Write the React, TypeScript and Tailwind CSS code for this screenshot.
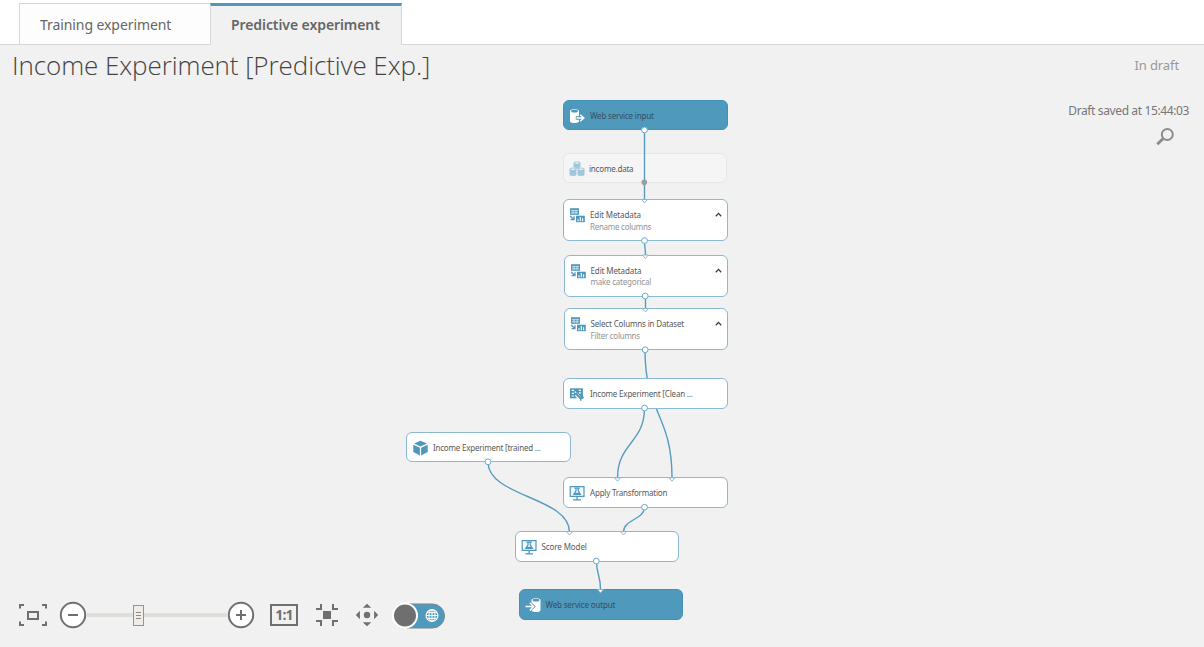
import React from 'react';

type IconName = 'input' | 'output' | 'dataset' | 'metadata' | 'clean' | 'cube' | 'score';

interface NodeSpec {
  x: number;
  y: number;
  h: number;
  icon: IconName;
  title: string;
  sub?: string;
  kind?: 'service' | 'ghost';
  textClass: string;
  subClass?: string;
}

const CANVAS_TOP = 90;

const nodes: NodeSpec[] = [
  { x: 563, y: 100, h: 30, icon: 'input', title: 'Web service input', kind: 'service', textClass: 'left-[26px] tracking-[-0.18px]' },
  { x: 562.5, y: 153, h: 30, icon: 'dataset', title: 'income.data', kind: 'ghost', textClass: 'left-[25.5px] tracking-[-0.2px]' },
  { x: 563, y: 199, h: 42, icon: 'metadata', title: 'Edit Metadata', sub: 'Rename columns', textClass: 'left-[26px] tracking-[-0.12px]', subClass: 'left-[26px] top-[21px] tracking-[-0.27px]' },
  { x: 563.5, y: 255, h: 42, icon: 'metadata', title: 'Edit Metadata', sub: 'make categorical', textClass: 'left-[26px] tracking-[-0.12px]', subClass: 'left-[26px] top-[20px] tracking-[-0.22px]' },
  { x: 563.5, y: 308, h: 42, icon: 'metadata', title: 'Select Columns in Dataset', sub: 'Filter columns', textClass: 'left-[26px] tracking-[-0.16px]', subClass: 'left-[26px] top-[21px] tracking-[-0.26px]' },
  { x: 563, y: 378, h: 31, icon: 'clean', title: 'Income Experiment [Clean ...', textClass: 'left-[26px] tracking-[-0.19px]' },
  { x: 406, y: 432, h: 30, icon: 'cube', title: 'Income Experiment [trained ...', textClass: 'left-[26px] tracking-[-0.21px]' },
  { x: 563, y: 477, h: 31, icon: 'score', title: 'Apply Transformation', textClass: 'left-[26px] tracking-[-0.2px]' },
  { x: 514.5, y: 531, h: 31, icon: 'score', title: 'Score Model', textClass: 'left-[26px] tracking-[-0.1px]' },
  { x: 518.5, y: 589, h: 31, icon: 'output', title: 'Web service output', kind: 'service', textClass: 'left-[26px] tracking-[-0.15px]' },
];

const backEdges = ['M645 350C645 414 672 414 672 478'];
const frontEdges = [
  'M644.5 130V199',
  'M644.5 241C644.5 248 645.5 248 645.5 255',
  'M645.5 296V309',
  'M644.5 408C644.5 443 617.5 443 617.5 478',
  'M488 462C488 497 569.5 497 569.5 532',
  'M644.5 507C644.5 520 623.5 519 623.5 532',
  'M596.5 561C596.5 575 600.5 575 600.5 589',
];
const outPorts = [
  [644.5, 130], [644.5, 240.5], [645.2, 296], [645.2, 349.8], [644.5, 408],
  [488, 461.8], [644.5, 507.2], [596.3, 561],
];
const inPorts = [
  [644.5, 200.5], [645.3, 256], [645.3, 309.5], [617.5, 478.8], [672, 478.8], [569.5, 532.6], [623.5, 532.6], [600.5, 590.5],
];

function NodeIcon({ name }: { name: IconName }) {
  const blue = '#4f98bb';
  switch (name) {
    case 'input':
      return (
        <svg width="16" height="16" viewBox="0 0 16 16" className="block">
          <path d="M1 3v10.200c0 2.400 9 2.400 9 0V3C10 .6 1 .6 1 3z" fill="#fff" />
          <ellipse cx="5.500" cy="3.200" rx="3.400" ry="1.400" fill={blue} />
          <path d="M6.800 10h7M10.800 6.500L14.700 10l-3.900 3.500" fill="none" stroke={blue} strokeWidth="3.400" />
          <path d="M7.500 10h7M11.200 6.800L14.800 10l-3.600 3.200" fill="none" stroke="#fff" strokeWidth="1.500" />
        </svg>
      );
    case 'output':
      return (
        <svg width="16" height="16" viewBox="0 0 16 16" className="block">
          <path d="M6.500 3v10.200c0 2.400 9 2.400 9 0V3c0-2.400-9-2.400-9 0z" fill="#fff" />
          <ellipse cx="11" cy="3.200" rx="3.400" ry="1.400" fill={blue} />
          <path d="M0 9.500h8M4.500 5.800L8.500 9.500l-4 3.900" fill="none" stroke={blue} strokeWidth="3.200" />
          <path d="M.5 9.500h8M4.800 5.800L8.600 9.500l-3.800 3.900" fill="none" stroke="#fff" strokeWidth="1.500" />
        </svg>
      );
    case 'dataset':
      return (
        <svg width="16" height="16" viewBox="0 0 16 16" className="block">
          {[[4.500, 0], [0.500, 6.300], [8.500, 6.300]].map(([x, y]) => (
            <g key={`${x}-${y}`} transform={`translate(${x} ${y})`}>
              <path d="M-.2 2v5.200c0 2.300 7.400 2.300 7.400 0V2C7.200-.3-.2-.3-.2 2z" fill="#9fc6d9" stroke="#f5f5f5" strokeWidth=".4" />
              <ellipse cx="3.500" cy="2" rx="2.500" ry=".8" fill="#e9f2f6" />
            </g>
          ))}
        </svg>
      );
    case 'metadata':
      return (
        <svg width="16" height="16" viewBox="0 0 16 16" className="block">
          <path d="M1 1.200h9v6.600H1z" fill={blue} />
          <path d="M1.800 3.700h7.400M1.800 5.800h7.400M4 2.800v4.300M7 2.800v4.300" stroke="#d9eaf2" strokeWidth=".8" />
          <path d="M1.200 9l3.300 3.200M5 9.300v3.400H1.600" fill="none" stroke={blue} strokeWidth="1.300" />
          <path d="M7 8.700h8.800v6.500H7z" fill={blue} />
          <path d="M9 14.200v-2M11.300 14.200V10M13.600 14.200v-3" stroke="#fff" strokeWidth="1.100" />
        </svg>
      );
    case 'clean':
      return (
        <svg width="16" height="16" viewBox="0 0 16 16" className="block">
          <path d="M1 2.300h12.900v10H1z" fill={blue} />
          <path d="M2.800 4.400h2.200M9.800 4.400h2M5.700 5.600l1.500 1.200M9.900 6.900h2M2.800 7.400h2.200M2.800 10h2.200" stroke="#fff" strokeWidth="1.200" />
          <path d="M7.200 8.500l5.500 6" stroke="#fff" strokeWidth="3.600" />
          <path d="M7.200 8l4.700 4.500" stroke={blue} strokeWidth="2" />
          <path d="M14 9.800l-2.400 2 .2 3M14.800 11.400l-2.800 1.200" stroke={blue} strokeWidth="1.400" fill="none" />
        </svg>
      );
    case 'cube':
      return (
        <svg width="16" height="16" viewBox="0 0 16 16" className="block">
          <path d="M8.500 .800L15 3.600 8.500 6.600 2 3.600z" fill={blue} />
          <path d="M1.300 4.700L7.900 7.700V15.500L1.300 12zM15.700 4.700L9.100 7.700V15.500l6.600-3.500z" fill={blue} />
        </svg>
      );
    case 'score':
      return (
        <svg width="16" height="16" viewBox="0 0 16 16" className="block">
          <path d="M1.200 1.600h13.800v9.700H1.200z" fill="#f4fafc" stroke={blue} strokeWidth="1.200" />
          <path d="M5.500 3.200h5.200M7 3.400v2.400L4.800 9.400h6.600L9.200 5.800V3.400" fill="none" stroke={blue} strokeWidth="1.200" />
          <path d="M5.800 7.700h4.600l.8 1.600H5z" fill={blue} />
          <path d="M8.100 11.300v3.300M4.200 14.900H12" stroke={blue} strokeWidth="1.300" />
        </svg>
      );
  }
}

function ExperimentNode({ node }: { node: NodeSpec }) {
  const { kind, sub } = node;
  const look =
    kind === 'service'
      ? 'bg-[#4f99bd] border-[#4290ba]'
      : kind === 'ghost'
        ? 'bg-[#f5f5f5] border-[#e5e7e8]'
        : 'bg-white border-[#8ab9d0]';
  const color = kind === 'service' ? 'text-[#36505d]' : 'text-[#595959]';
  return (
    <div
      className={`absolute w-[164.5px] rounded-[6px] border ${look}`}
      style={{ left: node.x, top: node.y - CANVAS_TOP, height: node.h }}
    >
      <div className="absolute left-[5px] top-[7px]">
        <NodeIcon name={node.icon} />
      </div>
      <div className={`absolute top-[8.5px] whitespace-nowrap text-[8px] leading-[12px] ${color} ${node.textClass}`}>
        {node.title}
      </div>
      {sub && (
        <>
          <div className={`absolute whitespace-nowrap text-[8px] leading-[11px] text-[#949494] ${node.subClass}`}>
            {sub}
          </div>
          <svg width="7" height="5" viewBox="0 0 7 5" className="absolute right-[5px] top-[12px]">
            <path d="M.8 4.300L3.500 1.400l2.700 2.900" fill="none" stroke="#3c3c3c" strokeWidth="1.300" />
          </svg>
        </>
      )}
    </div>
  );
}

function Edges({ paths, ports }: { paths: string[]; ports?: boolean }) {
  return (
    <svg width="1204" height="557" viewBox="0 90 1204 557" className="pointer-events-none absolute left-0 top-0">
      {paths.map((d) => (
        <path key={d} d={d} fill="none" stroke="#579dbf" strokeWidth="1.400" />
      ))}
      {ports && (
        <>
          <circle cx="644.300" cy="182.300" r="2.800" fill="#9a9fa2" />
          {inPorts.map(([x, y]) => (
            <path key={`${x},${y}`} d={`M${x - 3} ${y - 1}h6l-3 3.400z`} fill="#fff" stroke="#7fb4cd" strokeWidth=".9" />
          ))}
          {outPorts.map(([x, y]) => (
            <circle key={`${x},${y}`} cx={x} cy={y} r="2.900" fill="#fff" stroke="#6dabc9" strokeWidth="1" />
          ))}
        </>
      )}
    </svg>
  );
}

function Toolbar() {
  const g = '#6f6f6f';
  return (
    <div className="absolute bottom-[16px] left-[18px] flex h-[32px] items-center">
      <svg width="30" height="24" viewBox="0 0 30 24">
        <path d="M2 5.500V2h4M24 2h4v3.500M28 18.500V22h-4M6 22H2v-3.500" fill="none" stroke={g} strokeWidth="2" />
        <path d="M10 9h10v7H10z" fill="none" stroke={g} strokeWidth="2" />
      </svg>
      <svg width="28" height="28" viewBox="0 0 28 28" className="ml-[11px]">
        <circle cx="14" cy="14" r="12.200" fill="#fff" stroke={g} strokeWidth="2" />
        <path d="M9 14h10" stroke={g} strokeWidth="2" />
      </svg>
      <div className="relative h-[4px] w-[140px] bg-[#e0deda]">
        <div className="absolute left-[46px] top-[-8px] flex h-[21px] w-[11px] flex-col items-center justify-center gap-[2px] border border-[#979390] bg-[#f0ece8]">
          <span className="h-px w-[5px] bg-[#8d8985]" />
          <span className="h-px w-[5px] bg-[#8d8985]" />
          <span className="h-px w-[5px] bg-[#8d8985]" />
        </div>
      </div>
      <svg width="28" height="28" viewBox="0 0 28 28">
        <circle cx="14" cy="14" r="12.200" fill="#fff" stroke={g} strokeWidth="2" />
        <path d="M9 14h10M14 9v10" stroke={g} strokeWidth="2" />
      </svg>
      <div className="ml-[15px] flex h-[22px] w-[28px] items-center justify-center border-2 border-[#6f6f6f] font-['Open_Sans'] text-[14px] font-bold leading-none tracking-[-0.9px] text-[#6f6f6f]">
        <span className="-mt-px">1:1</span>
      </div>
      <svg width="24" height="24" viewBox="0 0 24 24" className="ml-[17px]">
        <path d="M8 8h8v8H8z" fill={g} />
        <path d="M1 6h5V1M23 6h-5V1M1 18h5v5M23 18h-5v5" fill="none" stroke={g} strokeWidth="2" />
      </svg>
      <svg width="24" height="24" viewBox="0 0 24 24" className="ml-[16px]">
        <circle cx="12" cy="12" r="3.200" fill={g} />
        <path d="M7.800 4.700h8.400L12 .700zM7.800 19.300h8.400l-4.200 4zM4.900 7.800v8.400L.8 12zM19.100 7.800v8.400l4.100-4.200z" fill={g} />
      </svg>
      <div className="relative ml-[17px] h-[25px] w-[49px] translate-y-[0.5px] rounded-full border border-[#7b8388] bg-[#4f99bd]">
        <div className="absolute left-[-5px] top-[-2px] h-[26px] w-[26px] rounded-full border-2 border-white bg-[#6f6f6f]" />
        <svg width="14" height="14" viewBox="0 0 14 14" className="absolute right-[5px] top-[4px]">
          <circle cx="7" cy="7" r="5.900" fill="none" stroke="#fff" strokeWidth="1.200" />
          <path d="M1 7h12M2 4.200h10M2 9.800h10M7 1v12" stroke="#fff" strokeWidth="1" />
          <ellipse cx="7" cy="7" rx="3" ry="5.900" fill="none" stroke="#fff" strokeWidth="1" />
        </svg>
      </div>
    </div>
  );
}

export default function App() {
  return (
    <div className="flex h-[647px] w-[1204px] flex-col overflow-hidden bg-[#f1f1f1] font-['Noto_Sans','Open_Sans',sans-serif]">
      <div className="flex h-[45px] shrink-0 items-end border-b border-[#d6d6d6] bg-white pl-[19px]">
        <div className="flex h-[41px] w-[191px] items-center border-l border-t border-[#d6d6d6] bg-[#fdfdfd] pl-[20px] text-[14px] text-[#666]">
          <span className="tracking-[-0.08px]">Training experiment</span>
        </div>
        <div className="relative -mb-px flex h-[42px] w-[192px] items-center border-x border-t-[3px] border-x-[#d6d6d6] border-t-[#5096b9] bg-[#f1f1f1] pb-[2px] pl-[20px] text-[14px] font-semibold text-[#666]">
          <span className="tracking-[-0.08px]">Predictive experiment</span>
        </div>
      </div>
      <div className="flex h-[45px] shrink-0 items-center justify-between pb-[4px] pl-[12px] pr-[25px]">
        <h1 className="whitespace-nowrap font-['Open_Sans'] text-[26px] font-light tracking-[-0.08px] text-[#444]">Income Experiment [Predictive Exp.]</h1>
        <span className="text-[13px] tracking-[-0.1px] text-[#999]">In draft</span>
      </div>
      <div className="relative h-[557px] shrink-0">
        <Edges paths={backEdges} />
        {nodes.map((node) => (
          <ExperimentNode key={`${node.x}-${node.y}`} node={node} />
        ))}
        <Edges paths={frontEdges} ports />
        <div className="absolute right-[15px] top-[12px] flex flex-col items-end gap-[7px]">
          <span className="text-[12px] leading-[18px] tracking-[-0.38px] text-[#777]">Draft saved at 15:44:03</span>
          <svg width="20" height="20" viewBox="0 0 20 20" className="mr-[14px]">
            <circle cx="12.300" cy="7.500" r="5.500" fill="none" stroke="#8c8c8c" strokeWidth="2" />
            <path d="M8 11.700L2.300 17.300" stroke="#8c8c8c" strokeWidth="3" />
          </svg>
        </div>
        <Toolbar />
      </div>
    </div>
  );
}
